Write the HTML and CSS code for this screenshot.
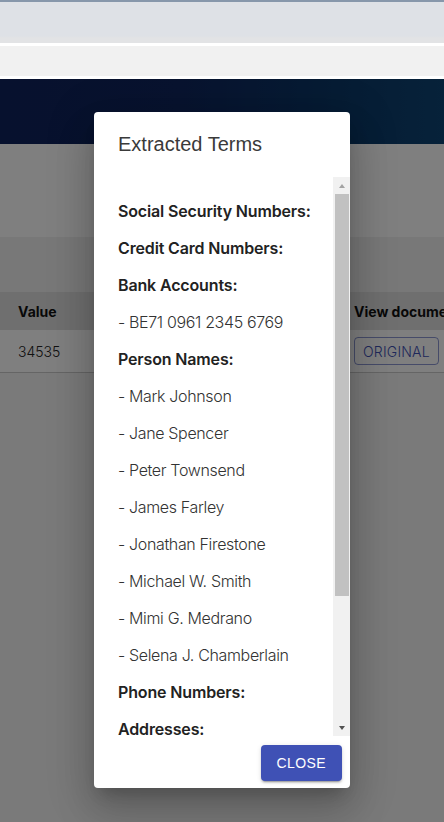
FILE: index.html
```html
<!DOCTYPE html>
<html lang="en">
<head>
<meta charset="utf-8">
<title>Extracted Terms</title>
<link rel="stylesheet" href="styles.css">
</head>
<body>
<div class="page">
  <div class="chrome">
    <div class="chrome-tabs"></div>
    <div class="chrome-gap"></div>
    <div class="chrome-bar"></div>
    <div class="chrome-gap"></div>
  </div>
  <div class="app">
    <div class="banner"></div>
    <div class="spacer"></div>
    <div class="toolbar"></div>
    <div class="table">
      <div class="row head">
        <div class="cell c1">Value</div>
        <div class="cell c2">View document</div>
      </div>
      <div class="row body">
        <div class="cell c1">34535</div>
        <div class="cell c2"><button class="btn-outline">Original</button></div>
      </div>
    </div>
    <div class="rest"></div>

    <div class="overlay"></div>

    <div class="dialog">
      <h2 class="dialog-title">Extracted Terms</h2>
      <div class="dialog-content">
        <div class="terms">
          <p class="label">Social Security Numbers:</p>
          <p class="label">Credit Card Numbers:</p>
          <p class="label">Bank Accounts:</p>
          <p class="item">- BE71 0961 2345 6769</p>
          <p class="label">Person Names:</p>
          <p class="item">- Mark Johnson</p>
          <p class="item">- Jane Spencer</p>
          <p class="item">- Peter Townsend</p>
          <p class="item">- James Farley</p>
          <p class="item">- Jonathan Firestone</p>
          <p class="item">- Michael W. Smith</p>
          <p class="item">- Mimi G. Medrano</p>
          <p class="item">- Selena J. Chamberlain</p>
          <p class="label">Phone Numbers:</p>
          <p class="label">Addresses:</p>
        </div>
        <div class="scrollbar">
          <div class="sb-btn"><span class="arrow-up"></span></div>
          <div class="sb-track"><div class="sb-thumb"></div></div>
          <div class="sb-btn"><span class="arrow-down"></span></div>
        </div>
      </div>
      <div class="dialog-actions">
        <button class="btn-contained">Close</button>
      </div>
    </div>
  </div>
</div>
</body>
</html>
```

FILE: styles.css
```css
* { box-sizing: border-box; }
html, body { margin: 0; padding: 0; }
body {
  width: 444px;
  height: 822px;
  overflow: hidden;
  font-family: Inter, "Liberation Sans", Arial, sans-serif;
  background: #f5f5f5;
}
.page {
  width: 444px;
  height: 822px;
  display: flex;
  flex-direction: column;
  overflow: hidden;
}

/* browser chrome */
.chrome { display: flex; flex-direction: column; flex: none; }
.chrome-tabs {
  height: 43px;
  background: linear-gradient(#dee1e6 0, #dee1e6 34px, #e2e3e5 36px, #e2e3e5 100%);
  border-top: 2px solid #8797ab;
}
.chrome-gap { height: 3px; background: #ffffff; }
.chrome-bar { height: 30px; background: #f1f1f1; }

/* app underneath the overlay */
.app {
  position: relative;
  flex: 1;
  display: flex;
  flex-direction: column;
  background: #f5f5f5;
}
.banner {
  height: 65px;
  background: linear-gradient(90deg, #0f225c 0%, #10265e 40%, #0c3868 75%, #0c4474 100%);
  flex: none;
}
.spacer { height: 93px; background: #ffffff; flex: none; }
.toolbar { height: 55px; background: #f0f0f0; flex: none; }
.table {
  background: #ffffff;
  overflow: hidden;
  flex: none;
}
.row {
  display: grid;
  grid-template-columns: 338px 200px;
  white-space: nowrap;
}
.row.head { height: 38px; background: #dedede; }
.row.body { height: 43px; background: #ffffff; border-bottom: 1px solid #cbcbcb; }
.cell {
  display: flex;
  align-items: center;
  font-size: 14px;
  color: #111111;
}
.head .cell { font-weight: 700; }
.body .c1 { font-weight: 300; color: #222222; }
.c1 { padding-left: 18px; }
.c2 { padding-left: 16px; }
.btn-outline {
  height: 28px;
  padding: 0 8px;
  border: 1px solid rgba(63, 81, 181, 0.6);
  border-radius: 4px;
  background: transparent;
  color: #3f51b5;
  font-family: Inter, "Liberation Sans", sans-serif;
  font-size: 14px;
  font-weight: 300;
  text-transform: uppercase;
  letter-spacing: 0.2px;
}
.rest { flex: 1; background: #f5f5f5; }

.overlay {
  position: absolute;
  inset: 0;
  background: rgba(0, 0, 0, 0.5);
}

/* dialog */
.dialog {
  position: absolute;
  left: 94px;
  top: 33px;
  width: 256px;
  height: 676px;
  background: #ffffff;
  border-radius: 4px;
  display: flex;
  flex-direction: column;
  box-shadow: 0 11px 15px -7px rgba(0,0,0,0.2), 0 24px 38px 3px rgba(0,0,0,0.14), 0 9px 46px 8px rgba(0,0,0,0.12);
  overflow: hidden;
}
.dialog-title {
  margin: 0;
  padding: 16px 24px 16px;
  height: 65px;
  font-family: "Liberation Sans", Arial, sans-serif;
  font-size: 20px;
  font-weight: 400;
  line-height: 32px;
  color: #3a3a3a;
  flex: none;
}
.dialog-content {
  height: 559px;
  display: flex;
  flex: none;
}
.terms {
  flex: 1;
  overflow: hidden;
  padding: 23px 0 0 24px;
}
.terms p {
  margin: 0 0 15px;
  font-size: 16px;
  line-height: 22px;
  white-space: nowrap;
}
.label { font-weight: 600; color: #222222; letter-spacing: -0.15px; }
.item { font-weight: 300; color: #333333; letter-spacing: -0.35px; }

.scrollbar {
  width: 17px;
  flex: none;
  background: #f1f1f1;
  display: flex;
  flex-direction: column;
}
.sb-btn {
  height: 17px;
  flex: none;
  display: flex;
  align-items: center;
  justify-content: center;
}
.arrow-up {
  width: 0; height: 0;
  border-left: 3.5px solid transparent;
  border-right: 3.5px solid transparent;
  border-bottom: 4px solid #a3a3a3;
}
.arrow-down {
  width: 0; height: 0;
  border-left: 3.5px solid transparent;
  border-right: 3.5px solid transparent;
  border-top: 4px solid #505050;
}
.sb-track { flex: 1; padding: 0 1px 0 2px; }
.sb-thumb { height: 402px; background: #c1c1c1; }

.dialog-actions {
  flex: 1;
  display: flex;
  justify-content: flex-end;
  align-items: flex-start;
  padding: 9px 8px 8px;
}
.btn-contained {
  height: 36px;
  padding: 0 16px;
  border: none;
  border-radius: 4px;
  background: #3f51b5;
  color: #ffffff;
  font-family: "Liberation Sans", Arial, sans-serif;
  font-size: 14px;
  letter-spacing: 0.4px;
  text-transform: uppercase;
  box-shadow: 0 3px 1px -2px rgba(0,0,0,0.2), 0 2px 2px 0 rgba(0,0,0,0.14), 0 1px 5px 0 rgba(0,0,0,0.12);
}
```
